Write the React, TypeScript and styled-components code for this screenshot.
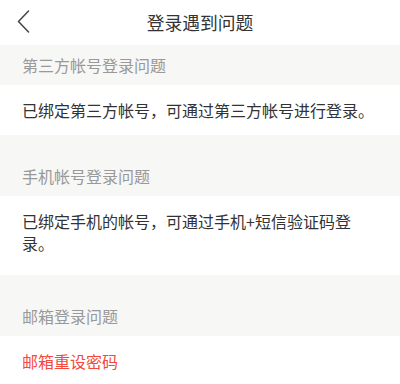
import React from "react";
import styled, { createGlobalStyle } from "styled-components";

const GlobalStyle = createGlobalStyle`
  html, body {
    margin: 0;
    padding: 0;
    background: #fff;
  }
  body {
    font-family: "Noto Sans CJK SC", "Noto Sans", sans-serif;
  }
`;

interface Section {
  title: string;
  body: string;
  link?: boolean;
}

const sections: Section[] = [
  {
    title: "第三方帐号登录问题",
    body: "已绑定第三方帐号，可通过第三方帐号进行登录。",
  },
  {
    title: "手机帐号登录问题",
    body: "已绑定手机的帐号，可通过手机+短信验证码登录。",
  },
  {
    title: "邮箱登录问题",
    body: "邮箱重设密码",
    link: true,
  },
];

const App: React.FC = () => {
  return (
    <Page>
      <GlobalStyle />
      <NavBar>
        <BackButton aria-label="返回">
          <svg width="13" height="23" viewBox="0 0 13 23" fill="none">
            <path
              d="M11.5 1 L1.5 11.5 L11.5 22"
              stroke="#444"
              strokeWidth="1.5"
              strokeLinecap="round"
              strokeLinejoin="round"
            />
          </svg>
        </BackButton>
        <Title>登录遇到问题</Title>
      </NavBar>
      {sections.map((s, i) => (
        <React.Fragment key={s.title}>
          <SectionHead $first={i === 0}>{s.title}</SectionHead>
          <Row $multi={i === 1}>
            {s.link ? <LinkText>{s.body}</LinkText> : s.body}
          </Row>
        </React.Fragment>
      ))}
    </Page>
  );
};

const Page = styled.div`
  width: 400px;
  height: 384px;
  overflow: hidden;
  background: #fff;
  display: flex;
  flex-direction: column;
`;

const NavBar = styled.div`
  height: 45px;
  flex-shrink: 0;
  display: flex;
  align-items: center;
  justify-content: center;
  position: relative;
`;

const BackButton = styled.div`
  position: absolute;
  left: 17px;
  top: 10px;
  display: flex;
`;

const Title = styled.div`
  font-size: 17.8px;
  color: #333;
  line-height: 1;
  margin-top: 1px;
`;

const SectionHead = styled.div<{ $first?: boolean }>`
  flex-shrink: 0;
  background: #f7f7f5;
  padding: ${(p) => (p.$first ? "10px" : "31px")} 22px 9px;
  font-size: 16px;
  line-height: 21px;
  color: #999;
`;

const Row = styled.div<{ $multi?: boolean }>`
  flex-shrink: 0;
  padding: 14px 22px ${(p) => (p.$multi ? "21px" : "14px")};
  font-size: 16px;
  line-height: 22px;
  color: #333;
`;

const LinkText = styled.span`
  color: #f5483a;
`;

export default App;
